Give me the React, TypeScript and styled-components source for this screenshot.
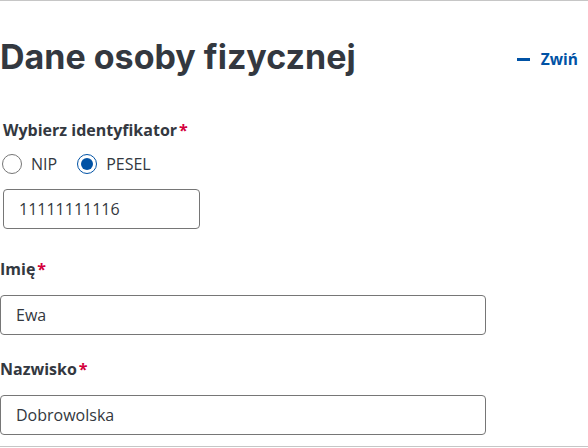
import React, { useState } from "react";
import { styled, createGlobalStyle } from "styled-components";

const colors = {
  text: "#333840",
  border: "#767676",
  divider: "#c6c6c6",
  blue: "#0052a5",
  required: "#d4003c",
};

const GlobalStyle = createGlobalStyle`
  html, body {
    margin: 0;
    padding: 0;
    background: #ffffff;
  }
  body {
    font-family: "Open Sans", "Noto Sans", sans-serif;
    color: ${colors.text};
  }
  * {
    box-sizing: border-box;
  }
`;

const Section = styled.section`
  width: 588px;
  border-top: 1px solid ${colors.divider};
  border-bottom: 1px solid ${colors.divider};
  padding: 36px 0 11px 0;
`;

const Header = styled.div`
  display: flex;
  align-items: center;
  justify-content: space-between;
  padding-right: 10px;
`;

const Title = styled.h2`
  margin: 0;
  font-family: Inter, "Noto Sans", sans-serif;
  font-weight: 700;
  font-size: 34px;
  line-height: 40px;
  color: ${colors.text};
`;

const CollapseButton = styled.button`
  display: flex;
  align-items: center;
  gap: 11px;
  border: none;
  background: none;
  padding: 0;
  margin-top: 4px;
  font-family: "Open Sans", sans-serif;
  font-weight: 700;
  font-size: 15.5px;
  color: ${colors.blue};
  cursor: pointer;
`;

const Dash = styled.span`
  display: block;
  width: 13px;
  height: 3px;
  background: ${colors.blue};
`;

const Fields = styled.div`
  display: flex;
  flex-direction: column;
  gap: 22px;
  margin-top: 41px;
`;

const Field = styled.div<{ $inset?: number; $extra?: number }>`
  display: flex;
  flex-direction: column;
  padding-left: ${(p) => p.$inset ?? 0}px;
  padding-bottom: ${(p) => p.$extra ?? 0}px;
`;

const Label = styled.label`
  font-weight: 700;
  font-size: 16px;
  line-height: 24px;
  color: ${colors.text};
  margin-bottom: 14px;
`;

const Required = styled.span`
  color: ${colors.required};
  margin-left: 2px;
`;

const RadioRow = styled.div`
  display: flex;
  align-items: center;
  gap: 20px;
  height: 24px;
  margin: -4px 0 13px -1px;
`;

const RadioOption = styled.label`
  display: flex;
  align-items: center;
  gap: 9px;
  font-size: 16px;
  color: ${colors.text};
  cursor: pointer;
`;

const RadioCircle = styled.span<{ $checked: boolean }>`
  width: 20px;
  height: 20px;
  border-radius: 50%;
  border: 1px solid ${(p) => (p.$checked ? colors.blue : colors.border)};
  display: flex;
  align-items: center;
  justify-content: center;
  &::after {
    content: "";
    width: 12px;
    height: 12px;
    border-radius: 50%;
    background: ${colors.blue};
    display: ${(p) => (p.$checked ? "block" : "none")};
  }
`;

const Input = styled.input<{ $width: number }>`
  width: ${(p) => p.$width}px;
  height: 40px;
  border: 1px solid ${colors.border};
  border-radius: 4px;
  padding: 0 15px;
  font-family: "Open Sans", sans-serif;
  font-size: 16px;
  color: ${colors.text};
  outline: none;
  background: #fff;
`;

export default function App() {
  const [idType, setIdType] = useState<"NIP" | "PESEL">("PESEL");
  const [id, setId] = useState("11111111116");
  const [firstName, setFirstName] = useState("Ewa");
  const [lastName, setLastName] = useState("Dobrowolska");

  return (
    <>
      <GlobalStyle />
      <Section>
        <Header>
          <Title>Dane osoby fizycznej</Title>
          <CollapseButton>
            <Dash />
            Zwiń
          </CollapseButton>
        </Header>
        <Fields>
          <Field $inset={3} $extra={6}>
            <Label>
              Wybierz identyfikator<Required>*</Required>
            </Label>
            <RadioRow>
              {(["NIP", "PESEL"] as const).map((t) => (
                <RadioOption key={t} onClick={() => setIdType(t)}>
                  <RadioCircle $checked={idType === t} />
                  {t}
                </RadioOption>
              ))}
            </RadioRow>
            <Input $width={197} value={id} onChange={(e) => setId(e.target.value)} />
          </Field>
          <Field>
            <Label>
              Imię<Required>*</Required>
            </Label>
            <Input $width={486} value={firstName} onChange={(e) => setFirstName(e.target.value)} />
          </Field>
          <Field>
            <Label>
              Nazwisko<Required>*</Required>
            </Label>
            <Input $width={486} value={lastName} onChange={(e) => setLastName(e.target.value)} />
          </Field>
        </Fields>
      </Section>
    </>
  );
}
